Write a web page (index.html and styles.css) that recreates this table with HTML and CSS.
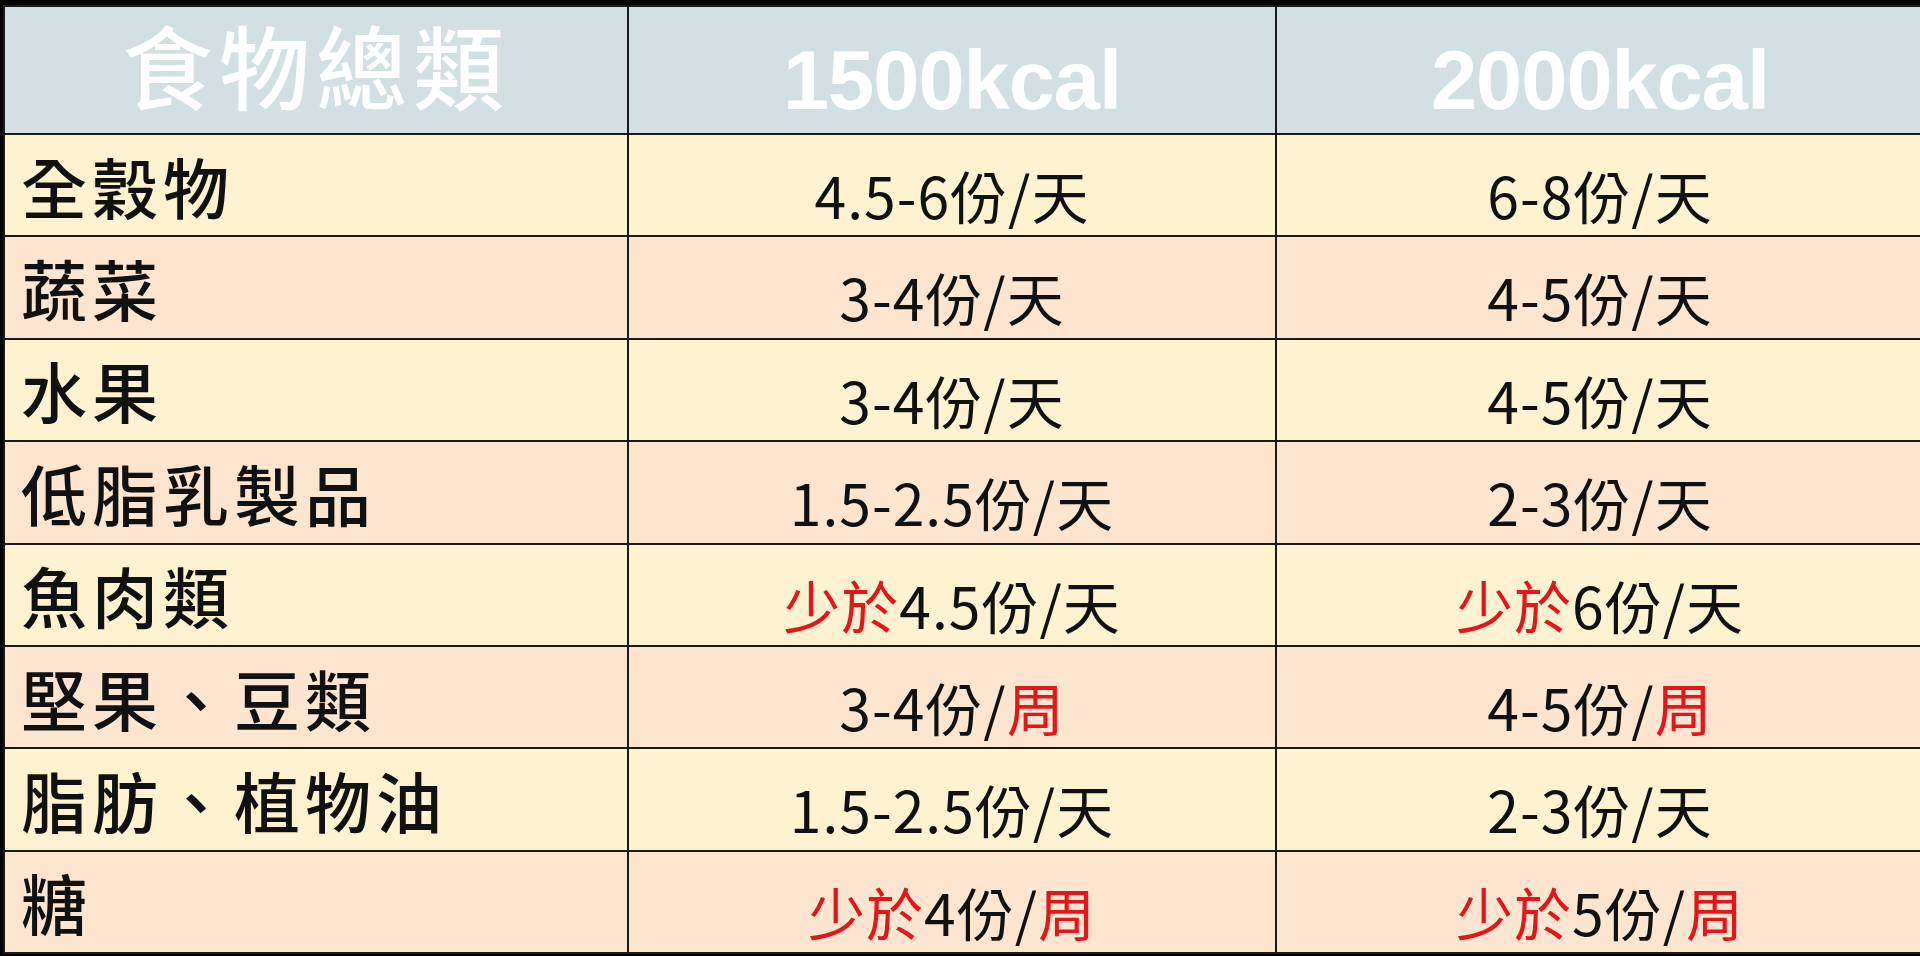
FILE: index.html
```html
<!DOCTYPE html>
<html lang="zh-Hant">
<head>
<meta charset="utf-8">
<title>食物總類</title>
<link rel="stylesheet" href="styles.css">
</head>
<body>
<table class="diet">
  <colgroup>
    <col class="c1">
    <col class="c2">
    <col class="c3">
  </colgroup>
  <thead>
    <tr>
      <th class="h-cjk">食物總類</th>
      <th class="h-num">1500kcal</th>
      <th class="h-num">2000kcal</th>
    </tr>
  </thead>
  <tbody>
    <tr class="odd">
      <td class="name">全穀物</td>
      <td class="val">4.5-6份/天</td>
      <td class="val">6-8份/天</td>
    </tr>
    <tr class="even">
      <td class="name">蔬菜</td>
      <td class="val">3-4份/天</td>
      <td class="val">4-5份/天</td>
    </tr>
    <tr class="odd">
      <td class="name">水果</td>
      <td class="val">3-4份/天</td>
      <td class="val">4-5份/天</td>
    </tr>
    <tr class="even">
      <td class="name">低脂乳製品</td>
      <td class="val">1.5-2.5份/天</td>
      <td class="val">2-3份/天</td>
    </tr>
    <tr class="odd">
      <td class="name">魚肉類</td>
      <td class="val"><span class="red">少於</span>4.5份/天</td>
      <td class="val"><span class="red">少於</span>6份/天</td>
    </tr>
    <tr class="even">
      <td class="name">堅果、豆類</td>
      <td class="val">3-4份/<span class="red">周</span></td>
      <td class="val">4-5份/<span class="red">周</span></td>
    </tr>
    <tr class="odd">
      <td class="name">脂肪、植物油</td>
      <td class="val">1.5-2.5份/天</td>
      <td class="val">2-3份/天</td>
    </tr>
    <tr class="even">
      <td class="name">糖</td>
      <td class="val"><span class="red">少於</span>4份/<span class="red">周</span></td>
      <td class="val"><span class="red">少於</span>5份/<span class="red">周</span></td>
    </tr>
  </tbody>
</table>
</body>
</html>
```
FILE: styles.css
```css
html, body {
  margin: 0;
  padding: 0;
  background: #000;
  height: 956px;
  overflow: hidden;
}

body {
  padding-top: 5px;
  padding-left: 3px;
}

.diet {
  border-collapse: collapse;
  table-layout: fixed;
  width: 1920px;
  font-family: "Noto Sans CJK TC", "Noto Sans CJK SC", sans-serif;
  color: #111;
}

.c1 { width: 624px; }
.c2 { width: 648px; }
.c3 { width: 648px; }

.diet th,
.diet td {
  border: 2px solid #1a1a1a;
  padding: 0;
  white-space: nowrap;
}

.diet thead tr {
  height: 128px;
  background: #d2e0e4;
}

.diet tbody tr {
  height: 102.4px;
}

.diet .odd { background: #fff2d1; }
.diet .even { background: #fde5d0; }

.diet .h-cjk {
  color: #fff;
  font-size: 91px;
  font-weight: 500;
  letter-spacing: 6px;
  line-height: 1.2;
  padding-bottom: 12px;
}

.diet .h-num {
  color: #fff;
  font-family: "Liberation Sans", Arial, sans-serif;
  font-size: 83px;
  font-weight: 700;
  line-height: 1.1;
  padding-top: 22px;
  letter-spacing: -1px;
}

.diet .name {
  text-align: left;
  font-size: 66px;
  font-weight: 500;
  letter-spacing: 5px;
  padding-left: 16px;
  line-height: 1.2;
}

.diet .val {
  text-align: center;
  font-size: 57px;
  font-weight: 400;
  letter-spacing: 1px;
  line-height: 1.2;
  padding-top: 18px;
}

.red {
  color: #e3161c;
}
```
